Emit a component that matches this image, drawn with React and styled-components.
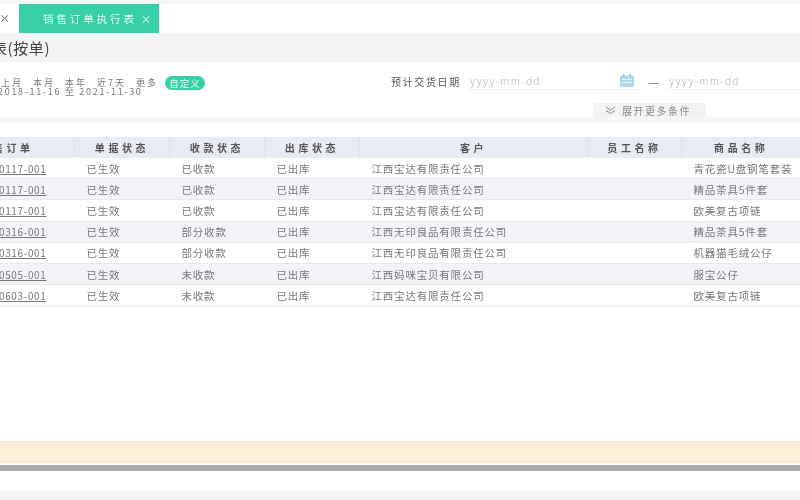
import React from "react";
import styled, { createGlobalStyle } from "styled-components";

const Global = createGlobalStyle`
  html, body { margin: 0; padding: 0; background: #fff; }
  body { font-family: "Noto Sans CJK SC", "Liberation Sans", sans-serif; color: #777; }
`;
const Page = styled.div`
  width: 800px; height: 500px; overflow: hidden; display: flex; flex-direction: column; background: #fff;
  filter: blur(0.45px);
`;
const TopStrip = styled.div`height: 4px; background: #f7f7f8;`;
const TabBar = styled.div`height: 29px; display: flex; align-items: center; background: #fff;`;
const PrevClose = styled.span`width: 19px; font-size: 11px; color: #666; line-height: 29px; text-indent: -1px;`;
const ActiveTab = styled.div`
  width: 140px; height: 29px; box-sizing: border-box; padding-left: 24px; background: #38cfa6; color: #e9fbf5;
  display: flex; align-items: center; gap: 4px; font-size: 10.5px;
`;
const TabLabel = styled.span`letter-spacing: 2.9px; white-space: nowrap;`;
const TitleBar = styled.div`height: 29px; background: #f3f4f6; display: flex; align-items: center; overflow: hidden;`;
const Title = styled.h1`margin: 0 0 0 -8px; font-size: 15px; font-weight: 400; color: #444; white-space: nowrap; letter-spacing: .6px;`;
const Filters = styled.section`height: 55px; display: grid; grid-template-columns: 391px 1fr; background: #fff;`;
const LeftFilter = styled.div`padding-top: 17px;`;
const QuickRow = styled.div`display: flex; align-items: center; height: 8px; margin-left: 1px;`;
const Quick = styled.span`font-size: 9px; color: #777; margin-right: 10px; white-space: nowrap; letter-spacing: 2px; line-height: 8px;`;
const Pill = styled.span`
  width: 40px; height: 14px; flex: none; margin-left: -3px; border-radius: 7px; background: #38cfa6; color: #eafbf6; font-size: 9.5px;
  display: flex; align-items: center; justify-content: center; letter-spacing: 1px;
`;
const DateRange = styled.div`font-size: 9px; color: #777; white-space: nowrap; margin: 1px 0 0 -2px; line-height: 8px; letter-spacing: 1.7px;`;
const RightFilter = styled.div`display: flex; flex-direction: column;`;
const DateRow = styled.div`display: flex; align-items: flex-start; height: 41px; padding-top: 12px; box-sizing: border-box;`;
const DateLabel = styled.span`width: 77px; font-size: 10px; color: #555; line-height: 16px; white-space: nowrap; letter-spacing: 1.65px;`;
const DateInput = styled.div`
  width: ${p => p.$w}px; height: 16px; box-sizing: border-box; border-bottom: 1px solid #eef0f2; display: flex; align-items: center;
  justify-content: space-between; padding: 0 6px 3px 2px; font-size: 10px; color: #c4c8cc; letter-spacing: 1.2px; flex: none;
`;
const Dash = styled.span`width: 27px; text-align: center; font-size: 12px; color: #666; line-height: 16px; flex: none;`;
const ExpandRow = styled.div`display: flex; padding-left: 202px;`;
const ExpandBtn = styled.button`
  width: 113px; height: 14px; border: 0; padding: 0 0 0 12px; background: #f3f3f3; color: #888; font: inherit; font-size: 10px;
  display: flex; align-items: center; gap: 6px; letter-spacing: 1.5px;
`;
const Divider = styled.div`height: 6px; background: #f6f6f7;`;
const TableWrap = styled.div`height: 318px; padding-top: 14px; box-sizing: border-box; overflow: hidden;`;
const Table = styled.table`
  border-collapse: collapse; table-layout: fixed; width: 862px; margin-left: -62px; font-size: 10.5px;
`;
const Th = styled.th`
  height: 21px; padding: 0; background: #e8ebf4; color: #555; font-weight: 700; font-size: 10px; letter-spacing: 3.6px;
  border-left: 1px solid ${p => p.$first ? "transparent" : "#dfe3ee"}; white-space: nowrap;
`;
const Tr = styled.tr`background: ${p => p.$alt ? "#f3f4f8" : "#fff"};`;
const Td = styled.td`
  height: 20.2px; padding: 0 0 0 12px; border-bottom: 1px solid #e6e8ec; color: #777; white-space: nowrap; overflow: hidden;
  letter-spacing: .8px;
`;
const IdCell = styled(Td)`text-decoration: underline; text-align: right; padding: 0 28px 0 0; font-size: 10px; letter-spacing: .65px;`;
const Spacer = styled.div`flex: 1;`;
const Notice = styled.div`height: 22px; background: #fcf0d9; border-top: 1px solid #efe8da; box-sizing: border-box;`;
const GapW = styled.div`height: 2px; background: #fff;`;
const ScrollBar = styled.div`height: 6px; background: #ababab;`;
const FootGap = styled.div`height: 20px; background: #fff;`;
const FootBar = styled.div`height: 9px; background: #f3f4f6;`;

const rows = [
  ["XS20190117-001", "已收款", "江西宝达有限责任公司", "青花瓷U盘钢笔套装"],
  ["XS20190117-001", "已收款", "江西宝达有限责任公司", "精品茶具5件套"],
  ["XS20190117-001", "已收款", "江西宝达有限责任公司", "欧美复古项链"],
  ["XS20190316-001", "部分收款", "江西无印良品有限责任公司", "精品茶具5件套"],
  ["XS20190316-001", "部分收款", "江西无印良品有限责任公司", "机器猫毛绒公仔"],
  ["XS20190505-001", "未收款", "江西妈咪宝贝有限公司", "服宝公仔"],
  ["XS20190603-001", "未收款", "江西宝达有限责任公司", "欧美复古项链"],
];
const widths = [136, 95, 95, 95, 228, 94, 119];

const Calendar = () => (
  <svg width="14" height="13" viewBox="0 0 14 13">
    <rect x="0" y="1.5" width="14" height="11.5" rx="1" fill="#b4d6ee" />
    <rect x="3" y="0" width="1.6" height="3" fill="#9cc8e6" />
    <rect x="9.4" y="0" width="1.6" height="3" fill="#9cc8e6" />
    <rect x="2" y="5" width="10" height="1" fill="#e6f2fa" />
    <rect x="2" y="8" width="10" height="1" fill="#e6f2fa" />
  </svg>
);
const Chevrons = () => (
  <svg width="11" height="9" viewBox="0 0 11 9" fill="none" stroke="#888" strokeWidth="1">
    <path d="M1 1l4.5 3L10 1M1 4.5l4.5 3 4.5-3" />
  </svg>
);

export default function App() {
  return (
    <Page>
      <Global />
      <TopStrip />
      <TabBar>
        <PrevClose>×</PrevClose>
        <ActiveTab><TabLabel>销售订单执行表</TabLabel><span>×</span></ActiveTab>
      </TabBar>
      <TitleBar><Title>表(按单)</Title></TitleBar>
      <Filters>
        <LeftFilter>
          <QuickRow>
            <Quick>上月</Quick><Quick>本月</Quick><Quick>本年</Quick><Quick>近7天</Quick><Quick>更多</Quick>
            <Pill>自定义</Pill>
          </QuickRow>
          <DateRange>2018-11-16 至 2021-11-30</DateRange>
        </LeftFilter>
        <RightFilter>
          <DateRow>
            <DateLabel>预计交货日期</DateLabel>
            <DateInput $w={172}>yyyy-mm-dd<Calendar /></DateInput>
            <Dash>—</Dash>
            <DateInput $w={133}>yyyy-mm-dd</DateInput>
          </DateRow>
          <ExpandRow><ExpandBtn><Chevrons />展开更多条件</ExpandBtn></ExpandRow>
        </RightFilter>
      </Filters>
      <Divider />
      <TableWrap>
        <Table>
          <colgroup>{widths.map((w, i) => <col key={i} width={w} />)}</colgroup>
          <thead>
            <tr>
              {["销售订单", "单据状态", "收款状态", "出库状态", "客户", "员工名称", "商品名称"].map((h, i) => (
                <Th key={h} $first={i === 0}>{h}</Th>
              ))}
            </tr>
          </thead>
          <tbody>
            {rows.map((r, i) => (
              <Tr key={i} $alt={i % 2 === 1}>
                <IdCell>{r[0]}</IdCell>
                <Td>已生效</Td>
                <Td>{r[1]}</Td>
                <Td>已出库</Td>
                <Td>{r[2]}</Td>
                <Td />
                <Td>{r[3]}</Td>
              </Tr>
            ))}
          </tbody>
        </Table>
      </TableWrap>
      <Spacer />
      <Notice />
      <GapW />
      <ScrollBar />
      <FootGap />
      <FootBar />
    </Page>
  );
}
